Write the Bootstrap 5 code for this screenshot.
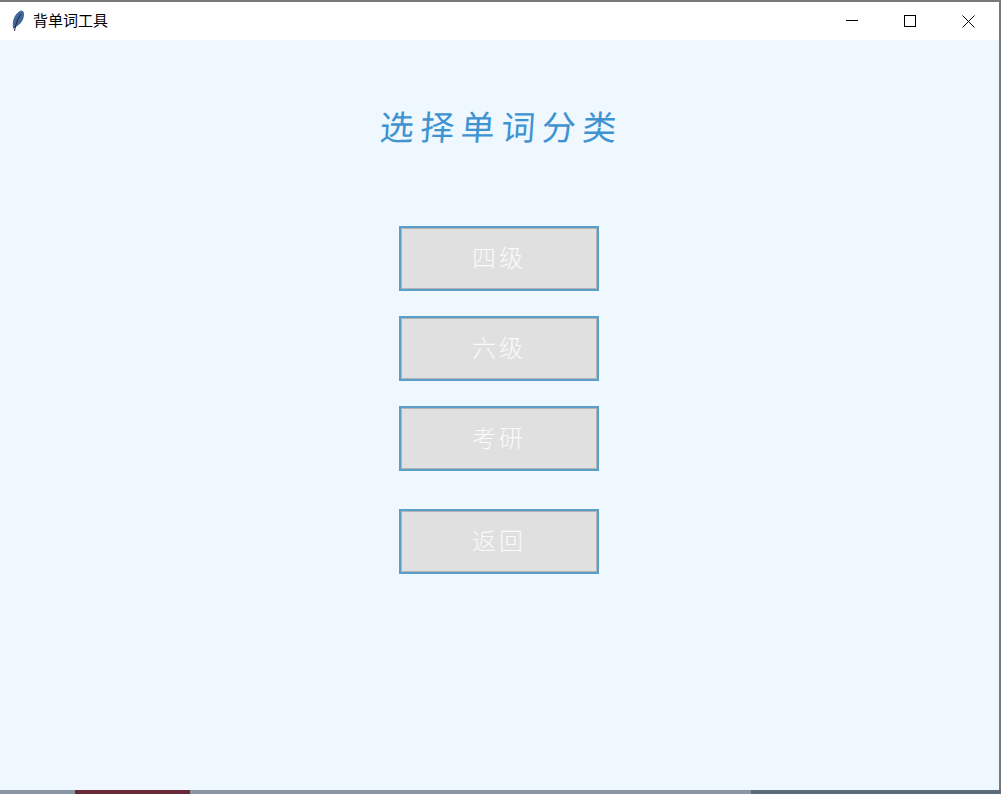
<!DOCTYPE html>
<html lang="zh-CN">
<head>
    <meta charset="UTF-8">
    <meta name="viewport" content="width=device-width, initial-scale=1.0">
    <title>背单词工具</title>
    <link rel="stylesheet" href="https://cdn.jsdelivr.net/npm/bootstrap@5.3.0/dist/css/bootstrap.min.css">
    <style>
        html, body { height: 794px; overflow: hidden; }
        body {
            font-family: "Noto Sans CJK SC", "Liberation Sans", sans-serif;
            background: linear-gradient(90deg, #8a95a3 0 7.500%, #6b2a3a 7.500% 19%, #8a95a3 19% 75%, #5d6a78 75% 100%);
        }
        .app-window {
            height: 790px;
            background: #eff8ff;
            border-top: 2px solid #77797d;
            border-right: 2px solid #77797d;
        }
        .title-bar { height: 38px; background: #fff; }
        .title-text { font-size: 15px; line-height: 1; color: #000; margin-left: 8px; margin-top: -4px; }
        .win-btn { width: 58px; height: 38px; }
        .win-btns { margin-right: 2px; }
        .feather { margin-left: 11px; }
        .app-body { padding-top: 59px; }
        .pick-title {
            font-size: 34px;
            line-height: 54px;
            letter-spacing: 6.500px;
            color: #3f93d0;
            font-weight: 400;
            margin: 0 0 73px 4px;
            transform: skewX(-4deg);
        }
        .word-btn {
            width: 200px;
            height: 65px;
            padding: 0 0 4px;
            background: #e0e0e0;
            color: #fafafa;
            border: 2px solid #5b9fc9;
            border-radius: 0;
            font-size: 24px;
            font-weight: 300;
            line-height: 1;
            letter-spacing: 3px;
            box-shadow: inset 0 0 0 1px #b4b4b4;
        }
        .word-btn:hover, .word-btn:active { background: #e0e0e0; color: #fafafa; border-color: #5b9fc9; }
        .word-list { gap: 25px; margin-left: -1px; }
        .back-btn { margin-top: 13px; }
    </style>
</head>
<body>
    <div class="app-window d-flex flex-column">
        <div class="title-bar d-flex align-items-center">
            <svg class="feather" width="14" height="22" viewBox="0 0 14 22">
                <path d="M2.500 19 C0.500 13 2.500 4 10 0.500 C13.500 0.500 13.500 5 12.500 8 C11.500 12 8 15 5 17 Z" fill="#44689c"/>
                <path d="M10 4 C7 8 5 13 3.500 21" stroke="#1c2230" stroke-width="1" fill="none"/>
            </svg>
            <span class="title-text">背单词工具</span>
            <div class="ms-auto d-flex win-btns">
                <div class="win-btn d-flex align-items-center justify-content-center">
                    <svg width="12" height="12" viewBox="0 0 12 12"><path d="M0 5.500H12" stroke="#000"/></svg>
                </div>
                <div class="win-btn d-flex align-items-center justify-content-center">
                    <svg width="12" height="12" viewBox="0 0 12 12"><rect x="0.500" y="0.500" width="11" height="11" fill="none" stroke="#000"/></svg>
                </div>
                <div class="win-btn d-flex align-items-center justify-content-center">
                    <svg width="13" height="13" viewBox="0 0 13 13"><path d="M0.500 0.500L12.500 12.500M12.500 0.500L0.500 12.500" stroke="#000"/></svg>
                </div>
            </div>
        </div>
        <div class="app-body flex-grow-1 d-flex flex-column align-items-center">
            <h1 class="pick-title">选择单词分类</h1>
            <div class="d-flex flex-column align-items-center word-list">
                <button type="button" class="btn word-btn">四级</button>
                <button type="button" class="btn word-btn">六级</button>
                <button type="button" class="btn word-btn">考研</button>
                <button type="button" class="btn word-btn back-btn">返回</button>
            </div>
        </div>
    </div>
</body>
</html>
